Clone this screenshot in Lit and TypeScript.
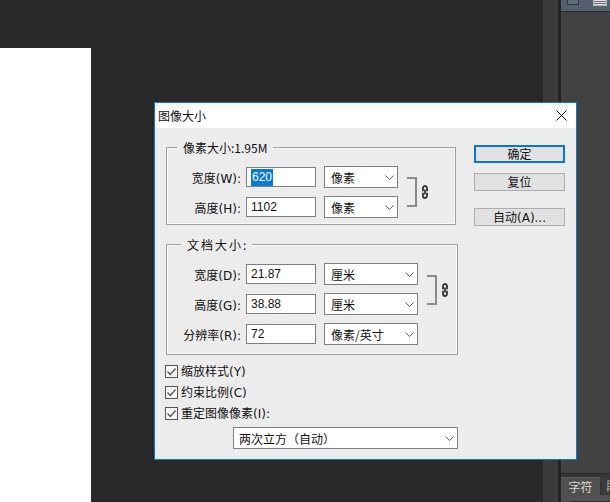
import { LitElement, html, css, svg } from "lit";
import { customElement } from "lit/decorators.js";

const chevron = html`<svg class="chev" width="9" height="5" viewBox="0 0 9 5"><path d="M.5.5 4.5 4.5 8.5.5" fill="none" stroke="#606060" stroke-width="1"/></svg>`;
const chain = svg`<path d="M1 6.2V3a2 2 0 0 1 4 0v3.2M1 7.8V11a2 2 0 0 0 4 0V7.8M3 4.5v5" fill="none" stroke="#333" stroke-width="1.8"/>`;

const field = (label: string, value: string, unit: string, selected = false, uw = "u74") => html`
  <div class="row">
    <span class="lab">${label}</span>
    <span class="input">${selected ? html`<span class="sel">${value}</span>` : value}</span>
    <span class="select ${uw}"><span>${unit}</span>${chevron}</span>
  </div>`;

const check = (label: string) => html`
  <div class="chk">
    <svg width="13" height="13" viewBox="0 0 13 13"><rect x=".5" y=".5" width="12" height="12" fill="#f6f6f6" stroke="#555"/><path d="M2.5 6.5 5.3 9.5 10.5 3.5" fill="none" stroke="#555" stroke-width="1.3"/></svg>
    <span class="chktext">${label}</span>
  </div>`;

@customElement("app-root")
export class AppRoot extends LitElement {
  static styles = css`
    :host { display: block; width: 610px; height: 502px; position: relative; overflow: hidden; background: #282828;
      font-family: "Noto Sans CJK SC", "Liberation Sans", sans-serif; font-size: 12px; color: #111; }
    .canvas { position: absolute; left: 0; top: 48px; width: 91px; bottom: 0; background: #fff; }
    .strip { position: absolute; left: 543px; width: 15px; top: 0; bottom: 0; background: #3a3a3a; }
    .edge { position: absolute; left: 558px; width: 3px; top: 0; bottom: 0; background: #242424; }
    .panel { position: absolute; left: 561px; right: 0; top: 0; bottom: 0; background: #424242; display: flex; flex-direction: column; }
    .ptop { height: 11px; background: #55606e; border-bottom: 1px solid #2a2a2a; display: flex; align-items: flex-start; gap: 14px; padding-left: 6px; flex: none; }
    .b1 { width: 10px; height: 4px; background: #5e6b7a; border: 1px solid #2f3640; border-top: 0; }
    .b2 { width: 12px; height: 5px; border: 1px solid #b4b8c0; border-top: 0; background: repeating-linear-gradient(#e2e2e2 0 1px, #667 1px 2px); }
    .pmid { flex: 1; border-bottom: 1px solid #2a2a2a; }
    .gap { height: 3px; background: #333; flex: none; }
    .tabs { height: 18px; display: flex; flex: none; background: #333; }
    .tab { width: 39px; background: #505050; color: #d8d8d8; font-size: 12px; line-height: 17px; text-align: center; border-top: 1px solid #5a5a5a; box-sizing: border-box; }
    .tab2 { margin-left: 1px; flex: 1; background: #3a3a3a; color: #aaa; line-height: 17px; padding-left: 5px; overflow: hidden; white-space: nowrap; }
    .pbody { height: 7px; flex: none; background: #505050; padding: 6px 0 0 9px; box-sizing: border-box; }
    .pinner { height: 1px; background: #2e2e2e; }

    .dialog { position: absolute; left: 154px; top: 102px; width: 423px; height: 358px; box-sizing: border-box;
      border: 1px solid #0a78d2; background: #ececec; display: flex; flex-direction: column; }
    .title { height: 25px; background: #fff; display: flex; align-items: center; justify-content: space-between; padding: 0 9px 0 3px; flex: none; color: #111; }
    .title svg { display: block; }
    .body { flex: 1; display: flex; padding: 19px 0 0 11px; }
    .left { width: 292px; display: flex; flex-direction: column; }
    .group { position: relative; box-sizing: border-box; border: 1px solid #a0a0a0; outline: 1px solid #f8f8f8; outline-offset: -2px; }
    .g1 { width: 290px; height: 78px; padding: 18px 0 0 0; }
    .g2 { width: 292px; height: 111px; margin-top: 19px; padding: 18px 0 0 0; }
    .legend { position: absolute; left: 10px; top: -8px; background: #ececec; padding: 0 6px; line-height: 16px; }
    .g2 .legend { letter-spacing: 2px; left: 14px; padding-right: 4px; }
    .row { display: flex; align-items: center; height: 22px; margin-bottom: 8px; }
    .lab { width: 79px; text-align: right; padding-right: 5px; box-sizing: border-box; white-space: nowrap; font-family: "DejaVu Sans", "Noto Sans CJK SC", sans-serif; }
    .input { width: 70px; height: 20px; box-sizing: border-box; border: 1px solid #7f7f7f; background: #fff; padding-left: 4px; line-height: 18px; font-family: "Liberation Sans", sans-serif; font-size: 12px; }
    .sel { background: #0a78d7; color: #fff; padding: 1px 1px 2px; }
    .select { margin-left: 8px; height: 22px; box-sizing: border-box; border: 1px solid #7f7f7f; background: #fff; display: flex; align-items: center; justify-content: space-between; padding: 0 3px 0 6px; }
    .u74 { width: 74px; }
    .u94 { width: 94px; }
    .chev { display: block; flex: none; }
    .link { position: absolute; display: flex; align-items: center; }
    .g1 .link { left: 240px; top: 29px; }
    .g2 .link { left: 260px; top: 30px; }
    .bracket { width: 8px; height: 26px; border: 2px solid #8a8a8a; border-left: 0; }
    .link svg { margin-left: 5px; display: block; }
    .checks { margin-top: 10px; display: flex; flex-direction: column; gap: 8px; }
    .chk { display: flex; align-items: center; gap: 3px; height: 13px; white-space: nowrap; margin-left: -1px; font-family: "DejaVu Sans", "Noto Sans CJK SC", sans-serif; }
    .chktext { padding-bottom: 2px; }
    .chk svg { flex: none; }
    .bigsel { margin: 7px 0 0 67px; height: 22px; width: 225px; box-sizing: border-box; border: 1px solid #7f7f7f; background: #fff; display: flex; align-items: center; justify-content: space-between; padding: 1px 3px 0 5px; }
    .right { margin-left: 16px; width: 91px; display: flex; flex-direction: column; margin-top: -2px; font-family: "DejaVu Sans", "Noto Sans CJK SC", sans-serif; }
    .btn { height: 18px; box-sizing: border-box; border: 1px solid #adadad; background: #e1e1e1; text-align: center; line-height: 16px; padding-top: 1px; white-space: nowrap; }
    .btn.def { border: 2px solid #0a78d2; line-height: 14px; padding-top: 1px; }
    .m1 { margin-top: 10px; }
    .m2 { margin-top: 17px; }
  `;

  render() {
    return html`
      <div class="canvas"></div>
      <div class="strip"></div>
      <div class="edge"></div>
      <div class="panel">
        <div class="ptop"><div class="b1"></div><div class="b2"></div></div>
        <div class="pmid"></div>
        <div class="gap"></div>
        <div class="tabs"><div class="tab">字符</div><div class="tab2">段</div></div>
        <div class="pbody"><div class="pinner"></div></div>
      </div>
      <div class="dialog">
        <div class="title">
          <span>图像大小</span>
          <svg width="11" height="11" viewBox="0 0 11 11"><path d="M.5.5l10 10M10.5.5l-10 10" stroke="#111" fill="none"/></svg>
        </div>
        <div class="body">
          <div class="left">
            <div class="group g1">
              <span class="legend">像素大小:1.95M</span>
              ${field("宽度(W):", "620", "像素", true)}
              ${field("高度(H):", "1102", "像素")}
              <div class="link"><div class="bracket"></div><svg width="6" height="14" viewBox="0 0 6 14">${chain}</svg></div>
            </div>
            <div class="group g2">
              <span class="legend">文档大小:</span>
              ${field("宽度(D):", "21.87", "厘米", false, "u94")}
              ${field("高度(G):", "38.88", "厘米", false, "u94")}
              ${field("分辨率(R):", "72", "像素/英寸", false, "u94")}
              <div class="link"><div class="bracket"></div><svg width="6" height="14" viewBox="0 0 6 14">${chain}</svg></div>
            </div>
            <div class="checks">
              ${check("缩放样式(Y)")}
              ${check("约束比例(C)")}
              ${check("重定图像像素(I):")}
            </div>
            <div class="bigsel"><span>两次立方（自动）</span>${chevron}</div>
          </div>
          <div class="right">
            <div class="btn def">确定</div>
            <div class="btn m1">复位</div>
            <div class="btn m2">自动(A)...</div>
          </div>
        </div>
      </div>
    `;
  }
}
